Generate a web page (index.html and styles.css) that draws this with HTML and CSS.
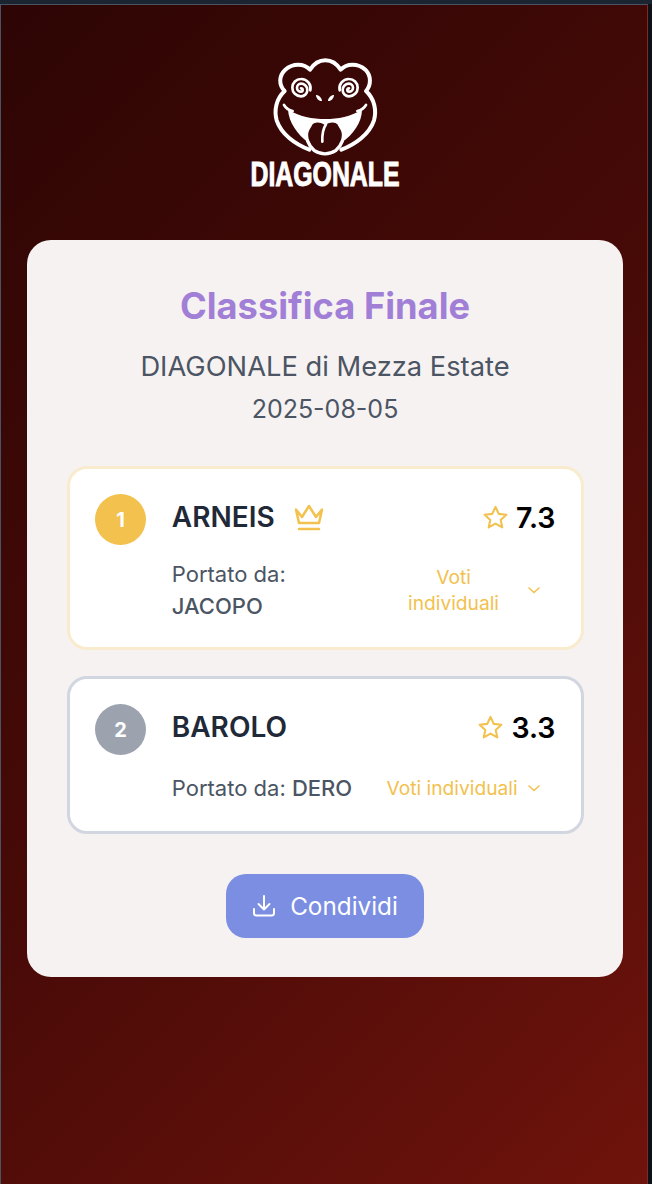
FILE: index.html
```html
<!DOCTYPE html>
<html lang="it">
<head>
<meta charset="utf-8">
<title>Classifica Finale</title>
<link rel="stylesheet" href="styles.css">
</head>
<body>
<main class="page">
  <header class="brand">
    <svg class="frog" viewBox="0 0 330 315" aria-hidden="true">
      <path class="line" d="M118 284C76 268 34 238 20 196C12 166 18 132 44 108C26 90 26 62 46 44C68 24 102 24 120 44C144 6 188 6 212 44C230 24 264 24 286 44C304 62 304 90 288 108C314 132 320 166 312 196C298 238 256 268 214 284"/>
      <path class="fill" d="M54 164C88 184 128 192 166 192C204 192 242 184 276 164C276 200 250 240 214 262L116 262C82 240 56 200 54 164Z"/>
      <path class="line thin" d="M42 150C48 160 56 166 68 168M288 150C282 160 274 166 262 168"/>
      <path class="tongue" d="M124 204C134 194 152 196 165 204C178 196 196 194 206 204C210 212 214 218 218 226C226 246 214 272 198 286C176 300 154 300 132 286C116 272 104 246 112 226C116 218 120 212 124 204Z"/>
      <path class="line thin" d="M168 208C160 220 156 238 157 260"/>
      <path class="line spiral" d="M93 100A5 5 0 0 1 93 110A12 12 0 0 1 93 86A19 19 0 0 1 93 124A26 26 0 0 1 93 72A28 28 0 0 1 121 106"/>
      <path class="line spiral" transform="matrix(-1 0 0 1 330 0)" d="M93 100A5 5 0 0 1 93 110A12 12 0 0 1 93 86A19 19 0 0 1 93 124A26 26 0 0 1 93 72A28 28 0 0 1 121 106"/>
      <path class="fill" d="M138 120C146 120 156 128 156 138C148 140 138 130 138 120ZM192 120C184 120 174 128 174 138C182 140 192 130 192 120Z"/>
    </svg>
    <div class="wordmark">DIAGONALE</div>
  </header>

  <section class="panel">
    <h1 class="title">Classifica Finale</h1>
    <p class="event">DIAGONALE di Mezza Estate</p>
    <p class="date">2025-08-05</p>

    <div class="ranking">
      <article class="entry entry-gold">
        <div class="badge badge-gold">1</div>
        <div class="entry-body">
          <div class="entry-top">
            <div class="wine">
              <span class="wine-name">ARNEIS</span>
              <svg class="crown" viewBox="0 0 30 28" aria-hidden="true">
                <path d="M2 6.500L8 14L15 3L22 14L28 6.500L25 20H5Z"/>
                <path d="M5 26H25"/>
              </svg>
            </div>
            <div class="score">
              <svg class="star" viewBox="0 0 24 24" aria-hidden="true"><path d="M12 1.800L15.100 8.500L22.400 9.300L17 14.300L18.500 21.500L12 17.800L5.500 21.500L7 14.300L1.600 9.300L8.900 8.500Z"/></svg>
              <span>7.3</span>
            </div>
          </div>
          <div class="entry-bottom">
            <p class="owner">Portato da:<br><strong>JACOPO</strong></p>
            <div class="votes">
              <span class="votes-label votes-wrapped">Voti<br>individuali</span>
              <svg class="chev" viewBox="0 0 16 10" aria-hidden="true"><path d="M2.500 2.500L8 7.500L13.500 2.500"/></svg>
            </div>
          </div>
        </div>
      </article>

      <article class="entry entry-silver">
        <div class="badge badge-silver">2</div>
        <div class="entry-body">
          <div class="entry-top">
            <div class="wine"><span class="wine-name">BAROLO</span></div>
            <div class="score">
              <svg class="star" viewBox="0 0 24 24" aria-hidden="true"><path d="M12 1.800L15.100 8.500L22.400 9.300L17 14.300L18.500 21.500L12 17.800L5.500 21.500L7 14.300L1.600 9.300L8.900 8.500Z"/></svg>
              <span>3.3</span>
            </div>
          </div>
          <div class="entry-bottom">
            <p class="owner">Portato da: <strong>DERO</strong></p>
            <div class="votes">
              <span class="votes-label">Voti individuali</span>
              <svg class="chev" viewBox="0 0 16 10" aria-hidden="true"><path d="M2.500 2.500L8 7.500L13.500 2.500"/></svg>
            </div>
          </div>
        </div>
      </article>
    </div>

    <div class="actions">
      <button class="share" type="button">
        <svg class="share-icon" viewBox="0 0 24 24" aria-hidden="true">
          <path d="M2 15V19C2 20.500 3 21.500 4.500 21.500H19.500C21 21.500 22 20.500 22 19V15"/>
          <path d="M12 2V15.500M6.500 10L12 15.500L17.500 10"/>
        </svg>
        <span>Condividi</span>
      </button>
    </div>
  </section>
</main>
</body>
</html>
```
FILE: styles.css
```css
* { box-sizing: border-box; }

html, body {
  margin: 0;
  height: 100%;
}

body {
  padding-top: 4px;
  background: linear-gradient(#1b2431 4px, #0d1117 4px);
  font-family: Inter, "Liberation Sans", sans-serif;
  overflow: hidden;
}

.page {
  height: 1180px;
  width: 648px;
  padding: 0 24px 0 26px;
  border-top: 1px solid #4a5361;
  border-left: 1px solid #4a5361;
  border-right: 1px solid #7d2a22;
  background: linear-gradient(135deg, #2d0504 0%, #470a07 50%, #6f130c 100%);
}

.brand {
  height: 235px;
  padding-top: 50px;
  display: flex;
  flex-direction: column;
  align-items: center;
}

.frog {
  width: 110px;
  height: 105px;
  flex: none;
}

.line {
  fill: none;
  stroke: #fff;
  stroke-width: 12;
  stroke-linecap: round;
  stroke-linejoin: round;
}

.thin { stroke-width: 8; }

.spiral { stroke-width: 8; }

.fill { fill: #fff; }

.tongue {
  fill: #3a0806;
  stroke: #fff;
  stroke-width: 10;
}

.wordmark {
  margin-top: -2px;
  color: #fff;
  font-family: "Liberation Sans", sans-serif;
  font-size: 35px;
  line-height: 32px;
  font-weight: 700;
  white-space: nowrap;
  transform: scaleX(0.71);
  -webkit-text-stroke: 1px #fff;
}

.panel {
  background: #f6f2f2;
  border-radius: 24px;
  padding: 40px 39.5px 39px;
  height: 737px;
}

.title {
  margin: 0;
  text-align: center;
  color: #a17fd6;
  font-size: 36.25px;
  line-height: 52px;
  font-weight: 700;
}

.event {
  margin: 17px 0 0;
  text-align: center;
  color: #4b5563;
  font-size: 27.3px;
  line-height: 36px;
}

.date {
  margin: 7px 0 0;
  text-align: center;
  color: #4b5563;
  font-size: 25px;
  line-height: 34px;
}

.ranking {
  margin-top: 40px;
  display: flex;
  flex-direction: column;
  gap: 26px;
}

.entry {
  background: #fff;
  border: 3px solid;
  border-radius: 20px;
  padding: 25px 25px 25px 25.5px;
  display: flex;
  gap: 25.6px;
}

.entry-gold { border-color: #f9ebcd; }

.entry-silver {
  border-color: #d2d6e0;
  padding-bottom: 24px;
}

.entry-silver .entry-bottom { margin-top: 19px; }

.badge {
  width: 51.2px;
  height: 51.2px;
  flex: none;
  border-radius: 50%;
  display: flex;
  align-items: center;
  justify-content: center;
  color: #fff;
  font-size: 20px;
  font-weight: 700;
}

.badge-gold { background: #f2c14e; }
.badge-silver { background: #9ca3af; }

.entry-body {
  flex: 1;
  min-width: 0;
}

.entry-top {
  display: flex;
  align-items: center;
  justify-content: space-between;
  height: 46px;
}

.wine {
  display: flex;
  align-items: center;
  gap: 19.5px;
}

.wine-name {
  color: #1f2937;
  font-size: 28px;
  font-weight: 600;
}

.crown {
  width: 30px;
  height: 28px;
  fill: none;
  stroke: #f2c14e;
  stroke-width: 2.500;
  stroke-linecap: round;
  stroke-linejoin: round;
}

.score {
  display: flex;
  align-items: center;
  gap: 8px;
  color: #000;
  font-size: 28.5px;
  font-weight: 600;
}

.star {
  width: 25px;
  height: 25px;
  fill: none;
  stroke: #f2c14e;
  stroke-width: 2;
  stroke-linejoin: round;
}

.entry-bottom {
  margin-top: 18px;
  display: flex;
  align-items: center;
  justify-content: space-between;
}

.owner {
  margin: 0;
  color: #4b5563;
  font-size: 22px;
  line-height: 32px;
}

.owner strong { font-weight: 500; }

.votes {
  display: flex;
  align-items: center;
  gap: 9px;
  padding: 6px 14px 6px 0;
  color: #f2c14e;
  font-size: 19.2px;
  line-height: 26px;
}

.votes-label {
  width: 130px;
  text-align: center;
  white-space: nowrap;
}

.votes-wrapped { padding-left: 4px; }

.chev {
  width: 16px;
  height: 10px;
  fill: none;
  stroke: #f2c14e;
  stroke-width: 1.500;
}

.actions {
  margin-top: 40px;
  display: flex;
  justify-content: center;
}

.share {
  width: 198px;
  height: 64px;
  border: 0;
  border-radius: 20px;
  background: #7b8ee2;
  color: #fff;
  font-family: inherit;
  font-size: 24.3px;
  display: flex;
  align-items: center;
  justify-content: center;
  gap: 14px;
}

.share-icon {
  width: 24px;
  height: 24px;
  fill: none;
  stroke: #fff;
  stroke-width: 2;
  stroke-linecap: round;
  stroke-linejoin: round;
}
```
